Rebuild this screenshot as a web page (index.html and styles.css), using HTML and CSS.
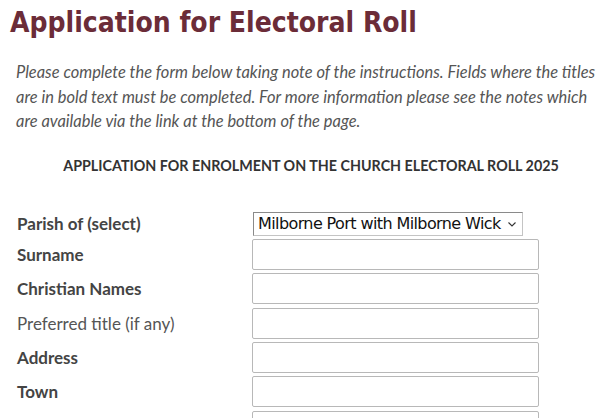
FILE: index.html
```html
<!DOCTYPE html>
<html lang="en">
<head>
    <meta charset="UTF-8">
    <meta name="viewport" content="width=device-width, initial-scale=1.0">
    <title>Application for Electoral Roll</title>
    <link rel="stylesheet" href="styles.css">
</head>
<body>

    <div class="page">
        <h1>Application for Electoral Roll</h1>

        <div class="content">
            <p class="intro">
                Please complete the form below taking note of the instructions. Fields where the titles<br>
                are in bold text must be completed. For more information please see the notes which<br>
                are available via the link at the bottom of the page.
            </p>

            <h2>APPLICATION FOR ENROLMENT ON THE CHURCH ELECTORAL ROLL 2025</h2>

            <form class="roll-form">
                <label class="req" for="parish">Parish of (select)</label>
                <div class="field select-wrap">
                    <select id="parish">
                        <option>Milborne Port with Milborne Wick</option>
                    </select>
                    <svg class="chevron" width="8" height="5" viewBox="0 0 8 5">
                        <polyline points="0.5,0.5 4,4 7.5,0.5" fill="none" stroke="#333" stroke-width="1.1"/>
                    </svg>
                </div>

                <label class="req" for="surname">Surname</label>
                <div class="field"><input type="text" id="surname"></div>

                <label class="req" for="names">Christian Names</label>
                <div class="field"><input type="text" id="names"></div>

                <label for="title">Preferred title (if any)</label>
                <div class="field"><input type="text" id="title"></div>

                <label class="req" for="address">Address</label>
                <div class="field"><input type="text" id="address"></div>

                <label class="req" for="town">Town</label>
                <div class="field"><input type="text" id="town"></div>

                <label class="req" for="postcode">Postcode</label>
                <div class="field"><input type="text" id="postcode"></div>
            </form>
        </div>
    </div>

</body>
</html>
```

FILE: styles.css
```css
body {
    margin: 0;
    padding: 0;
    background-color: #fff;
    color: #444;
    font-family: Lato, 'Open Sans', sans-serif;
}

.page {
    padding: 6px 0 0 10px;
}

h1 {
    margin: 0;
    font-family: 'DejaVu Sans', Tahoma, sans-serif;
    font-stretch: condensed;
    font-size: 28px;
    font-weight: bold;
    color: #6b2c38;
    line-height: 34px;
}

.content {
    padding-left: 6px;
}

.intro {
    margin: 20px 0 0 0;
    font-style: italic;
    font-size: 16.45px;
    line-height: 24.5px;
    white-space: nowrap;
    color: #555;
}

h2 {
    margin: 23px 0 0 0;
    padding-left: 6px;
    text-align: center;
    font-size: 14.3px;
    line-height: 17px;
    font-weight: bold;
    color: #333;
}

.roll-form {
    display: grid;
    grid-template-columns: 236px 288px;
    row-gap: 3.4px;
    margin-top: 38px;
    align-items: center;
}

.roll-form label {
    font-size: 17px;
    color: #555;
    padding-left: 1px;
}

.roll-form label.req {
    font-weight: bold;
    color: #444;
}

.select-wrap {
    position: relative;
}

.field select {
    appearance: none;
    -webkit-appearance: none;
    box-sizing: border-box;
    width: 270px;
    height: 24px;
    margin: 0 0 0 1px;
    padding: 0 0 0 4px;
    font-family: Tahoma, 'DejaVu Sans', sans-serif;
    font-size: 16px;
    letter-spacing: -0.6px;
    border: 1px solid #c4c4c4;
    border-top-color: #8a8a8a;
    border-left-color: #8a8a8a;
    border-radius: 0;
    background: #fff;
    color: #111;
}

.chevron {
    position: absolute;
    left: 256px;
    top: 10px;
}

.field input {
    box-sizing: border-box;
    width: 287px;
    height: 31px;
    border: 1px solid #b8b8b8;
    border-radius: 2px;
    background: #fff;
}
```
